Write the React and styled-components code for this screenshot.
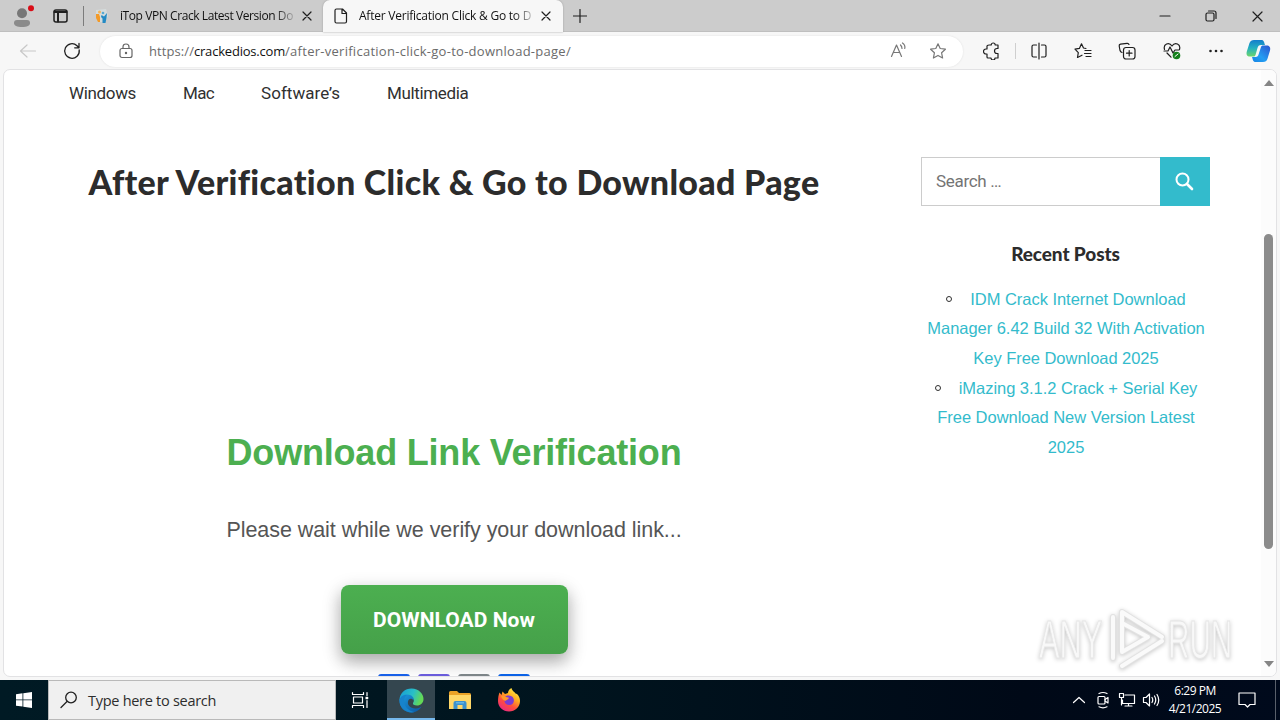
import React from "react";
import styled, { createGlobalStyle } from "styled-components";

const colors = {
  chrome: "#f7f7f7",
  strip: "#cccccc",
  teal: "#33bbcc",
  green: "#4caf50",
  text: "#303030",
};

const uiFont = '"Open Sans", "Noto Sans", sans-serif';
const siteFont = 'Roboto, "Open Sans", sans-serif';
const titleFont = 'Lato, "Open Sans", sans-serif';
const bodyFont = '"Liberation Sans", Arial, sans-serif';

const GlobalStyle = createGlobalStyle`
  * { box-sizing: border-box; }
  body { margin: 0; overflow: hidden; font-family: ${uiFont}; }
  h1, h2, h3, p, ul { margin: 0; padding: 0; }
  svg { display: block; flex: none; }
`;

const Desktop = styled.div`
  width: 1280px;
  height: 720px;
  display: flex;
  flex-direction: column;
  background: ${colors.chrome};
  overflow: hidden;
`;

const TabStrip = styled.header`
  height: 32px;
  flex: none;
  display: flex;
  background: ${colors.strip};
  box-shadow: inset 0 -1px 0 #bfbfbf;
`;

const StripStart = styled.div`
  width: 84px;
  display: flex;
  align-items: center;
  padding-left: 12px;
  gap: 19px;
  border-right: 1px solid #7c7c7c;
  height: 20px;
  margin-top: 6px;
`;

const Tab = styled.div`
  width: ${({ $active }) => ($active ? 240 : 239)}px;
  height: 32px;
  display: flex;
  align-items: center;
  padding-left: ${({ $active }) => ($active ? 10 : 11)}px;
  background: ${({ $active }) => ($active ? colors.chrome : "transparent")};
  border-radius: 7px 7px 0 0;
  box-shadow: ${({ $active }) => ($active ? "0 0 2px #999" : "none")};
`;

const TabTitle = styled.span`
  width: 174px;
  margin: 0 7px 0 ${({ $indent }) => $indent}px;
  overflow: hidden;
  white-space: nowrap;
  font-size: 12px;
  line-height: 18px;
  letter-spacing: ${({ $spacing }) => $spacing}px;
  color: #111;
  mask-image: linear-gradient(90deg, #000 155px, transparent 178px);
`;

const NewTab = styled.div`
  padding: 9px 0 0 10px;
`;

const WindowButtons = styled.div`
  margin-left: auto;
  display: flex;
  align-items: center;
`;

const WindowButton = styled.div`
  width: 46px;
  display: flex;
  justify-content: center;
`;

const Toolbar = styled.div`
  height: 37px;
  flex: none;
  display: flex;
  align-items: center;
  padding: 1px 0 0 18px;
`;

const AddressBar = styled.div`
  width: 863px;
  height: 31px;
  flex: none;
  margin-left: 18px;
  padding: 0 16px 0 18px;
  display: flex;
  align-items: center;
  background: #fff;
  border-radius: 16px;
  box-shadow: 0 0 2px #ddd;
`;

const Url = styled.div`
  flex: 1;
  margin-left: 15px;
  font-size: 13px;
  color: #6b6b6b;
  white-space: nowrap;
`;

const UrlPart = styled.span`
  letter-spacing: ${({ $spacing }) => $spacing}px;
  color: ${({ $host }) => ($host ? "#111" : "inherit")};
`;

const ToolButtons = styled.div`
  flex: 1;
  display: flex;
  align-items: center;
  padding-left: 20px;
`;

const ToolButton = styled.div`
  width: 44.2px;
  display: flex;
  justify-content: center;
`;

const ToolDivider = styled.i`
  width: 1px;
  height: 16px;
  margin: 0 1px 0 14px;
  background: #cfcfcf;
`;

const CopilotButton = styled.div`
  margin-left: 8px;
`;

const Viewport = styled.main`
  height: 608px;
  flex: none;
  margin: 0 3px 3px;
  display: flex;
  position: relative;
  background: #fff;
  border: 1px solid #e2e2e4;
  border-radius: 7px;
  overflow: hidden;
`;

const Page = styled.div`
  flex: 1;
  display: flex;
  flex-direction: column;
`;

const Nav = styled.nav`
  height: 46px;
  display: flex;
  padding-left: 65px;
`;

const NavLink = styled.a`
  width: ${({ $width }) => $width}px;
  font: 400 17px/46px ${siteFont};
  letter-spacing: ${({ $spacing }) => $spacing}px;
  white-space: nowrap;
  color: ${colors.text};
`;

const Columns = styled.div`
  flex: 1;
  display: flex;
`;

const Article = styled.article`
  width: 730px;
  margin-left: 85px;
  display: flex;
  flex-direction: column;
  align-items: center;
`;

const PageTitle = styled.h1`
  margin-top: 44px;
  font: 900 34px/44px ${titleFont};
  letter-spacing: 0.3px;
  white-space: nowrap;
  color: #2c2c2c;
`;

const VerifyTitle = styled.h2`
  margin-top: 225px;
  font: 700 36px/48px ${bodyFont};
  letter-spacing: -0.2px;
  white-space: nowrap;
  color: ${colors.green};
`;

const VerifyText = styled.p`
  margin-top: 38px;
  font: 400 21.5px/30px ${bodyFont};
  letter-spacing: -0.05px;
  white-space: nowrap;
  color: #555;
`;

const DownloadButton = styled.button`
  width: 227px;
  height: 69px;
  flex: none;
  margin-top: 40px;
  border: 0;
  border-radius: 8px;
  background: linear-gradient(${colors.green}, #45a049);
  box-shadow: 0 8px 16px rgba(0, 0, 0, 0.2), 0 6px 20px rgba(0, 0, 0, 0.19);
  font: 700 21px/30px ${siteFont};
  letter-spacing: 0.05px;
  color: #fff;
`;

const ShareRow = styled.div`
  display: flex;
  gap: 8px;
  margin-top: 20px;
`;

const ShareButton = styled.i`
  width: 32px;
  height: 32px;
  border-radius: 3px;
  background: ${({ $color }) => $color};
`;

const Sidebar = styled.aside`
  width: 289px;
  margin: 41px 0 0 102px;
  text-align: center;
`;

const SearchForm = styled.div`
  height: 49px;
  display: flex;
`;

const SearchField = styled.div`
  flex: 1;
  padding-left: 14px;
  border: 1px solid #ccc;
  border-right: 0;
  text-align: left;
  font: 400 17px/47px ${siteFont};
  letter-spacing: -0.3px;
  color: #747474;
`;

const SearchSubmit = styled.div`
  width: 50px;
  display: flex;
  align-items: center;
  justify-content: center;
  padding: 0 2px 2px 0;
  background: ${colors.teal};
`;

const WidgetTitle = styled.h3`
  margin-top: 36px;
  font: 900 19px/24px ${titleFont};
  letter-spacing: -0.1px;
  color: #2c2c2c;
`;

const PostList = styled.ul`
  margin-top: 18.6px;
  padding: 0 3px 0 4px;
  list-style: none;
  font: 400 16.5px/29.7px ${bodyFont};
  letter-spacing: -0.04px;
  color: ${colors.teal};
`;

const Bullet = styled.i`
  display: inline-block;
  width: 6px;
  height: 6px;
  margin-right: 18px;
  border: 1px solid #303030;
  border-radius: 50%;
  vertical-align: 3px;
`;

const ScrollTrack = styled.div`
  width: 15px;
  display: flex;
  flex-direction: column;
  align-items: center;
  padding-top: 10px;
  background: #fcfcfc;
`;

const ScrollThumb = styled.div`
  width: 9px;
  height: 315px;
  flex: none;
  margin: 148px 0 112px;
  border-radius: 5px;
  background: #8b8b8b;
`;

const Watermark = styled.div`
  position: absolute;
  right: 36px;
  bottom: 3px;
`;

const Taskbar = styled.footer`
  height: 40px;
  flex: none;
  display: flex;
  align-items: stretch;
  background: linear-gradient(90deg, #001a24, #00141e 45%, #000917 80%, #000a1c);
`;

const TaskButton = styled.div`
  width: ${({ $width }) => $width || 48}px;
  display: flex;
  align-items: center;
  justify-content: center;
  background: ${({ $active }) => ($active ? "#34464f" : "transparent")};
  box-shadow: ${({ $active }) => ($active ? "inset 0 -2px 0 #76b9ed" : "none")};
`;

const TaskDivider = styled.i`
  width: 3px;
`;

const TaskSearch = styled.div`
  width: 288px;
  display: flex;
  align-items: center;
  gap: 10px;
  padding-left: 11px;
  background: #f0f0f0;
  border: 1px solid #b9b9b9;
  font-size: 14.5px;
  letter-spacing: -0.28px;
  color: #2d2d2d;
`;

const Tray = styled.div`
  margin-left: auto;
  display: flex;
  align-items: center;
`;

const TrayIcon = styled.div`
  width: 24px;
  display: flex;
  justify-content: center;
`;

const Clock = styled.div`
  width: 64px;
  margin-right: 8px;
  text-align: center;
  font-size: 12px;
  line-height: 18px;
  letter-spacing: -0.5px;
  color: #fff;
`;

const ShowDesktop = styled.i`
  width: 5px;
  height: 40px;
  margin-left: 16px;
  border-left: 1px solid #59606b;
`;

const Icon = ({ size = 18, color = "#1f1f1f", stroke = 1.2, children }) => (
  <svg
    width={size}
    height={size}
    viewBox={`0 0 ${size} ${size}`}
    fill="none"
    stroke={color}
    strokeWidth={stroke}
    strokeLinecap="round"
    strokeLinejoin="round"
  >
    {children}
  </svg>
);

const CloseIcon = ({ size = 12 }) => (
  <Icon size={size}>
    <path d={`M2 2 ${size - 2} ${size - 2}M${size - 2} 2 2 ${size - 2}`} />
  </Icon>
);

const ProfileIcon = () => (
  <svg width="22" height="24" viewBox="0 0 22 24">
    <circle cx="10" cy="9.300" r="5" fill="#777" />
    <path d="M2 19q0-3 3-3h10q3 0 3 3c0 2.600-3 4-8 4s-8-1.400-8-4z" fill="#8b8b8b" />
    <circle cx="19" cy="4.300" r="3" fill="#d90d17" />
  </svg>
);

const FaviconIcon = () => (
  <svg width="14" height="16" viewBox="0 0 14 16">
    <path d="M1 2 11 1l2 7-3 6H4L1 9z" fill="#d5dcdc" />
    <path d="M1 6h3l1 3v5H3l-2-4z" fill="#f39a28" />
    <path d="M12 5 9 8.500 6.500 7 6 9l1.500 1.500V15h3l1-5z" fill="#248ac4" />
    <circle cx="4.500" cy="4" r="1.500" fill="#f4b35c" />
    <circle cx="8" cy="5" r="1.300" fill="#58a9d3" />
  </svg>
);

const STAR = "M9 1.800 11.200 6.500 16.400 7.200 12.600 10.800 13.600 16 9 13.400 4.400 16 5.400 10.800 1.600 7.200 6.800 6.500z";

const HealthIcon = () => (
  <Icon size={18}>
    <path d="M1.500 7.500C0 2 6-.5 9 4c3-4.500 9-2 7.500 3.500M4 11l4 4.200M1 9h4l2-4 3 6 2-3h4" />
    <circle cx="13.500" cy="13.500" r="3.800" fill="#14801b" stroke="none" />
    <path d="m12 14.500 3-2.500" stroke="#fff" strokeWidth="1" />
  </Icon>
);

const CopilotIcon = () => (
  <svg width="25" height="24" viewBox="0 0 25 24">
    <defs>
      <linearGradient id="copilotLeft" x1="0" y1="0" x2="0" y2="1">
        <stop offset="0" stopColor="#137dcc" />
        <stop offset=".5" stopColor="#24b1c0" />
        <stop offset="1" stopColor="#6ed66b" />
      </linearGradient>
      <linearGradient id="copilotRight" x1="1" y1="0" x2="0" y2="1">
        <stop offset="0" stopColor="#2c54cf" />
        <stop offset=".6" stopColor="#239df2" />
        <stop offset="1" stopColor="#1683e4" />
      </linearGradient>
    </defs>
    <path d="M8 1h7c3 0 3 2 4 5h-4c-2 0-3 1-3.500 3L9.500 16c-.5 1-1 1.500-2 1.500H4c-3 0-4-2-3.200-5L3.500 4C4.300 2 5.800 1 8 1z" fill="url(#copilotLeft)" />
    <path d="M17 6.500h3.500c3 0 4.300 2 3.500 5l-2.600 8.500c-.6 2-2 3-4.400 3H10c-3 0-3-2-4-5h3.500c2 0 2.700-1 3.200-3L15 8c.4-1 1-1.500 2-1.500z" fill="url(#copilotRight)" />
  </svg>
);

const EdgeIcon = () => (
  <svg width="25" height="25" viewBox="0 0 25 25">
    <defs>
      <linearGradient id="edgeTop" x1="0" y1="0" x2="1" y2=".3">
        <stop offset="0" stopColor="#159bd6" />
        <stop offset=".6" stopColor="#29bfc7" />
        <stop offset="1" stopColor="#63d957" />
      </linearGradient>
      <linearGradient id="edgeBody" x1="0" y1="0" x2="1" y2="1">
        <stop offset="0" stopColor="#1b9be0" />
        <stop offset="1" stopColor="#0b559f" />
      </linearGradient>
    </defs>
    <path d="M.5 12.500C.5 5 6 .5 12.500.5 20 .5 24.500 6 24.500 11c0 4-3 6.500-6.500 6.500-3 0-4.500-1-4-2.500 2-2.500.5-5.500-3-5.500C5 8 1 10 .5 12.500z" fill="url(#edgeTop)" />
    <path d="M.5 12.500C1 8.500 4 6.500 8 6.500c4.500 0 7.500 3 6.500 6-1-2-3.500-2.500-5-.5-2.500 5 2.500 9 7.500 8.500 2.500-.2 4.500-1.200 5.500-2C20.500 22 17 24.500 12.500 24.500 5.500 24.500.5 19.500.5 12.500z" fill="url(#edgeBody)" />
    <path d="M8 7c-3 2-4 6-2 10 2 4.500 6 6.500 9.500 7.100C8 26 .5 20 .5 12.500 1 9 4 6.500 8 7z" fill="#1783cc" />
  </svg>
);

const FolderIcon = () => (
  <svg width="22" height="19" viewBox="0 0 22 19">
    <path d="M0 1.500Q0 0 1.500 0H8l2 2h10.500Q22 2 22 3.500V18H0z" fill="#eba227" />
    <path d="M0 4h22v14H0z" fill="#ffd768" />
    <path d="M4.500 18v-6q0-2 2-2h9q2 0 2 2v6h-4v-4h-5v4z" fill="#3b91ce" />
    <path d="M7 11h8v1.500H7z" fill="#62b4e6" />
  </svg>
);

const FirefoxIcon = () => (
  <svg width="24" height="24" viewBox="0 0 24 24">
    <defs>
      <linearGradient id="foxBody" x1=".8" y1="0" x2=".2" y2="1">
        <stop offset="0" stopColor="#fff04a" />
        <stop offset=".35" stopColor="#ffae20" />
        <stop offset=".65" stopColor="#ff4d3d" />
        <stop offset="1" stopColor="#e8258a" />
      </linearGradient>
    </defs>
    <path d="M2.500 4.500 4.500 7l1-3.500L8 6l3-1c0-2.500 2-4.500 3.500-5 .5 3 3 3.500 4 5.500l1.500.5c2 2 3 4.200 3 7C23 19 18 23.500 12 23.500S1 19 1 13c0-3 .5-6 1.500-8.500z" fill="url(#foxBody)" />
    <path d="M8 9c1.500-2 4.500-2 7-.5 3 2 2.500 8-2 8.500-4 .3-6-2.500-5.500-5 1.500.5 3-.2 4-1.500C10 10.500 9 10 8 9z" fill="#7b3bd3" />
    <path d="M4 8c2-1 4-.5 5 1l3 .7c-.5 1.500-2.500 1.500-3 3C7 13 5 11 4 8z" fill="#ff9a29" />
  </svg>
);

const playMark = "M79 53V12M88 45V7l40 25M88 18v29l26-15zM88 61l40-25";

const WatermarkText = styled.text`
  font: 53px ${bodyFont};
`;

const MarkGroup = styled.g`
  filter: drop-shadow(0 1px 2px rgba(0, 0, 0, 0.22));
`;

const AnyRunMark = () => (
  <svg width="206" height="68" viewBox="0 0 206 68">
    <MarkGroup fill="#f8f8f8" stroke="#e6e6e6" strokeWidth="1">
      <WatermarkText transform="translate(5 53) scale(.58 1)">ANY</WatermarkText>
      <WatermarkText transform="translate(134 53) scale(.56 1)">RUN</WatermarkText>
      <g fill="none" strokeLinejoin="round" strokeLinecap="round">
        <path d={playMark} stroke="#e2e2e2" strokeWidth="6" />
        <path d={playMark} stroke="#fafafa" strokeWidth="4" />
      </g>
    </MarkGroup>
  </svg>
);

const navLinks = [
  { label: "Windows", width: 114, spacing: -0.35 },
  { label: "Mac", width: 78, spacing: -0.7 },
  { label: "Software’s", width: 126, spacing: 0.05 },
  { label: "Multimedia", width: 90, spacing: -0.35 },
];

const posts = [
  "IDM Crack Internet Download Manager 6.42 Build 32 With Activation Key Free Download 2025",
  "iMazing 3.1.2 Crack + Serial Key Free Download New Version Latest 2025",
];

const shareColors = ["#1760e8", "#6a5cdb", "#7d8588", "#0b62e6"];

const BrowserTabs = () => (
  <TabStrip>
    <StripStart>
      <ProfileIcon />
      <Icon size={16} stroke={1.5}>
        <rect x="1" y="2" width="13" height="12" rx="2" />
        <path d="M1.500 4h12M5 4v9.500" strokeWidth="2" />
      </Icon>
    </StripStart>
    <Tab>
      <FaviconIcon />
      <TabTitle $indent={11} $spacing={-0.42}>iTop VPN Crack Latest Version Do</TabTitle>
      <CloseIcon />
    </Tab>
    <Tab $active>
      <Icon size={16}>
        <path d="M3.500 1h6l4 4v8.500q0 1.500-1.500 1.500H3.500Q2 15 2 13.500v-11Q2 1 3.500 1zM9 1v4.500h4.500" />
      </Icon>
      <TabTitle $indent={10} $spacing={-0.23}>After Verification Click &amp; Go to D</TabTitle>
      <CloseIcon />
    </Tab>
    <NewTab>
      <Icon size={14}><path d="M7 .5v13M.5 7h13" /></Icon>
    </NewTab>
    <WindowButtons>
      <WindowButton><Icon size={12}><path d="M1 6h10" /></Icon></WindowButton>
      <WindowButton>
        <Icon size={12}>
          <rect x="1" y="3" width="8" height="8" rx="1.500" />
          <path d="M3.500 1H9q2 0 2 2v5.500" />
        </Icon>
      </WindowButton>
      <WindowButton><CloseIcon size={13} /></WindowButton>
    </WindowButtons>
  </TabStrip>
);

const BrowserToolbar = () => (
  <Toolbar>
    <Icon size={20} color="#c8c8c8"><path d="M17.500 10H3M9 4l-6.500 6L9 16" /></Icon>
    <Icon size={44} stroke={1.3}>
      <path d="M41.200 21A7.300 7.300 0 1 1 39 16.700l2 2M41 14.500v4.300h-4.300" />
    </Icon>
    <AddressBar>
      <Icon size={16} color="#666">
        <rect x="2" y="5.500" width="12" height="9" rx="2" />
        <path d="M5 5.500V4q0-3 3-3t3 3v1.500" />
        <circle cx="8" cy="10" r=".6" fill="#666" />
      </Icon>
      <Url>
        <UrlPart $spacing={0.08}>https://</UrlPart>
        <UrlPart $host $spacing={-0.2}>crackedios.com</UrlPart>
        <UrlPart $spacing={0.27}>/after-verification-click-go-to-download-page/</UrlPart>
      </Url>
      <Icon size={40} color="#777">
        <path d="M2.500 25.500 7.500 14l5 11.500M4.300 21.500h6.500M11.500 14q1.500 1.500 1.500 3.500M13.500 12q3 2 2.300 5.500" />
      </Icon>
      <Icon size={18} color="#777"><path d={STAR} /></Icon>
    </AddressBar>
    <ToolButtons>
      <Icon>
        <path d="M6 3h2.200a2 2 0 0 1 4 0H15v3.500h-1a2.200 2.200 0 0 0 0 5h1V16h-3a2 2 0 0 1-4 0H5q-1 0-1-1v-3H3a2.200 2.200 0 0 1 0-5h1V4q0-1 2-1z" />
      </Icon>
      <ToolDivider />
      <ToolButton>
        <Icon><path d="M9 1v16M6.500 3H3.500Q2 3 2 4.500v9Q2 15 3.500 15h3M11.500 3h3Q16 3 16 4.500v9q0 1.500-1.500 1.500h-3" /></Icon>
      </ToolButton>
      <ToolButton>
        <Icon><path d="M12 6.500 9.500 6 7.500 1.800 5.400 6.400 1 7.200l3.300 3.500-.8 4.800 4.500-2.300M11 8.500h6M10.500 11.500H17M12 14.500h5" /></Icon>
      </ToolButton>
      <ToolButton>
        <Icon>
          <path d="M4 10.500Q2.500 10 2 8.500L1.200 4Q1 2.500 2.500 2.200L9 1.300q1.500-.2 2 1.200" />
          <rect x="5.500" y="5.500" width="11.500" height="11.500" rx="2.500" />
          <path d="M11.200 8.500v5.500M8.500 11.200H14" />
        </Icon>
      </ToolButton>
      <ToolButton><HealthIcon /></ToolButton>
      <ToolButton>
        <Icon>
          <g fill="#222" stroke="none">
            <circle cx="3.500" cy="9" r="1.300" />
            <circle cx="9" cy="9" r="1.300" />
            <circle cx="14.500" cy="9" r="1.300" />
          </g>
        </Icon>
      </ToolButton>
      <CopilotButton><CopilotIcon /></CopilotButton>
    </ToolButtons>
  </Toolbar>
);

const SitePage = () => (
  <Viewport>
    <Page>
      <Nav>
        {navLinks.map(({ label, width, spacing }) => (
          <NavLink key={label} $width={width} $spacing={spacing}>{label}</NavLink>
        ))}
      </Nav>
      <Columns>
        <Article>
          <PageTitle>After Verification Click &amp; Go to Download Page</PageTitle>
          <VerifyTitle>Download Link Verification</VerifyTitle>
          <VerifyText>Please wait while we verify your download link...</VerifyText>
          <DownloadButton>DOWNLOAD Now</DownloadButton>
          <ShareRow>
            {shareColors.map((color) => <ShareButton key={color} $color={color} />)}
          </ShareRow>
        </Article>
        <Sidebar>
          <SearchForm>
            <SearchField>Search …</SearchField>
            <SearchSubmit>
              <Icon size={20} color="#fff" stroke={2}>
                <circle cx="8.500" cy="8.500" r="6" />
                <path d="m13 13 5 5" strokeWidth="2.600" />
              </Icon>
            </SearchSubmit>
          </SearchForm>
          <WidgetTitle>Recent Posts</WidgetTitle>
          <PostList>
            {posts.map((post) => <li key={post}><Bullet />{post}</li>)}
          </PostList>
        </Sidebar>
      </Columns>
    </Page>
    <ScrollTrack>
      <svg width="10" height="6"><path d="M0 6 5 0l5 6z" fill="#858585" /></svg>
      <ScrollThumb />
      <svg width="10" height="6"><path d="M0 0h10L5 6z" fill="#858585" /></svg>
    </ScrollTrack>
    <Watermark><AnyRunMark /></Watermark>
  </Viewport>
);

const WindowsTaskbar = () => (
  <Taskbar>
    <TaskButton>
      <svg width="16" height="16" viewBox="0 0 16 16">
        <path d="M0 2.200 6.500 1.300v6.200H0zM7.300 1.200 16 0v7.500H7.300zM0 8.300h6.500v6.300L0 13.700zM7.300 8.300H16V16l-8.700-1.200z" fill="#fff" />
      </svg>
    </TaskButton>
    <TaskSearch>
      <Icon size={18} stroke={1.3}>
        <circle cx="11" cy="6.500" r="5.300" />
        <path d="m7 10.500-6 6" />
      </Icon>
      Type here to search
    </TaskSearch>
    <TaskButton>
      <Icon size={18} color="#fff">
        <path d="M1.500 1.500v2h11v-2M1.500 16.500v-2h11v2M2.500 6h9v6h-9zM16 1.500v3M16 9.500v7" />
        <path d="M15 6h2v2h-2z" fill="#fff" strokeWidth=".5" />
      </Icon>
    </TaskButton>
    <TaskDivider />
    <TaskButton $active><EdgeIcon /></TaskButton>
    <TaskButton $width={50}><FolderIcon /></TaskButton>
    <TaskButton><FirefoxIcon /></TaskButton>
    <Tray>
      <TrayIcon><Icon size={14} color="#fff"><path d="m1.500 9.500 5.500-5 5.500 5" /></Icon></TrayIcon>
      <TrayIcon>
        <Icon size={18} color="#fff">
          <rect x="4" y="5.500" width="7" height="7.500" rx="1" />
          <path d="m11 8.500 3-2v5.500l-3-2M5 2.500q4-2 8 0M5 15.800q4 2 8 0" />
        </Icon>
      </TrayIcon>
      <TrayIcon>
        <Icon size={18} color="#fff">
          <path d="M7 4h9.500v8.500h-12V9M10.500 12.500V15M7 15h7M1.500 2.500h4v4h-4zM3.500 6.500V14" />
        </Icon>
      </TrayIcon>
      <TrayIcon>
        <Icon size={18} color="#fff">
          <path d="M1.500 6.500h2.500l3.500-3.500v12L4 11.500H1.500zM10 6.500q1.500 2.500 0 5M12.500 5q2.500 4 0 8M15 3.500q3.500 5.500 0 11" />
        </Icon>
      </TrayIcon>
      <Clock>
        <div>6:29 PM</div>
        <div>4/21/2025</div>
      </Clock>
      <TrayIcon>
        <Icon size={18} color="#fff"><path d="M1 2h16v11.500h-5L9.500 16 7 13.500H1z" /></Icon>
      </TrayIcon>
      <ShowDesktop />
    </Tray>
  </Taskbar>
);

const App = () => (
  <Desktop>
    <GlobalStyle />
    <BrowserTabs />
    <BrowserToolbar />
    <SitePage />
    <WindowsTaskbar />
  </Desktop>
);

export default App;
